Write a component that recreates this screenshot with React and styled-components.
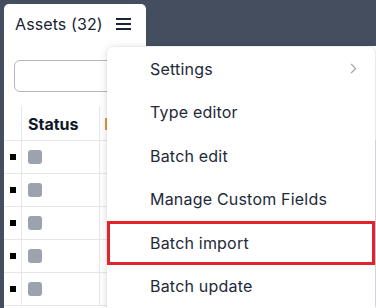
import { ChevronRight } from 'lucide-react'
import styled, { createGlobalStyle } from 'styled-components'

const GlobalStyle = createGlobalStyle`
    html, body {
        margin: 0;
        padding: 0;
        background: #444e5e;
        font-family: Inter, 'Noto Sans', sans-serif;
        overflow: hidden;
    }
`

const rows = [1, 2, 3, 4, 5]

const menuItems = [
    { label: 'Settings', sub: true },
    { label: 'Type editor' },
    { label: 'Batch edit' },
    { label: 'Manage Custom Fields' },
    { label: 'Batch import', marked: true },
    { label: 'Batch update' },
]

export default function App() {
    return (
        <Page>
            <GlobalStyle />
            <Panel>
                <Tab>
                    <TabTitle>Assets (32)</TabTitle>
                    <Burger>
                        <span />
                        <span />
                        <span />
                    </Burger>
                </Tab>
                <Body>
                    <Search />
                    <Table>
                        <HeadRow>
                            <Cell $w={18} />
                            <HeadCell>Status</HeadCell>
                            <HeadCell>
                                <SortMark />
                            </HeadCell>
                        </HeadRow>
                        {rows.map((r) => (
                            <Row key={r}>
                                <Cell $w={18}>
                                    <Dot />
                                </Cell>
                                <Cell $w={78}>
                                    <StatusBox />
                                </Cell>
                                <Cell />
                            </Row>
                        ))}
                    </Table>
                </Body>
            </Panel>

            <Menu>
                {menuItems.map((item) => (
                    <MenuItem key={item.label} $marked={item.marked}>
                        <span>{item.label}</span>
                        {item.sub && <ChevronRight size={17} strokeWidth={1.5} color="#9ca3af" />}
                    </MenuItem>
                ))}
            </Menu>
        </Page>
    )
}

const Page = styled.div`
    position: relative;
    width: 376px;
    height: 308px;
    padding: 4px 0 0 4px;
    box-sizing: border-box;
    overflow: hidden;
`

const Panel = styled.div`
    display: flex;
    flex-direction: column;
`

const Tab = styled.div`
    display: flex;
    align-items: center;
    width: 142px;
    height: 42px;
    padding: 0 0 3px 11px;
    box-sizing: border-box;
    background: #fff;
    border-radius: 5px 5px 0 0;
`

const TabTitle = styled.div`
    font-size: 16px;
    color: #1a2433;
    letter-spacing: 0.1px;
`

const Burger = styled.div`
    display: flex;
    flex-direction: column;
    gap: 3.5px;
    margin-left: 13px;
    padding-top: 1px;

    span {
        display: block;
        width: 15px;
        height: 1.7px;
        background: #1a2433;
    }
`

const Body = styled.div`
    display: flex;
    flex-direction: column;
    background: #fff;
    height: 270px;
    padding-top: 14px;
`

const Search = styled.div`
    margin-left: 10px;
    width: 300px;
    height: 32px;
    box-sizing: border-box;
    border: 1px solid #b5b8bd;
    border-radius: 6px;
`

const Table = styled.div`
    display: flex;
    flex-direction: column;
    margin-top: 15px;
`

const Row = styled.div`
    display: flex;
    height: 33px;
    border-bottom: 1px solid #e5e7eb;
    box-sizing: border-box;
`

const HeadRow = styled(Row)`
    height: 34px;
`

const Cell = styled.div`
    display: flex;
    align-items: center;
    flex: ${(p) => (p.$w ? `0 0 ${p.$w}px` : '1')};
    border-right: 1px solid #e5e7eb;
    box-sizing: border-box;
    padding-left: 6px;
`

const HeadCell = styled(Cell)`
    flex: 0 0 78px;
    font-size: 16px;
    font-weight: 700;
    color: #111827;
    padding-left: 6px;
    padding-top: 1px;

    &:last-child {
        flex: 1;
        border-right: none;
        padding-left: 5px;
    }
`

const SortMark = styled.div`
    width: 2px;
    height: 12px;
    background: #e8943a;
`

const Dot = styled.div`
    width: 6px;
    height: 6px;
    background: #000;
`

const StatusBox = styled.div`
    width: 14px;
    height: 14px;
    border-radius: 3px;
    background: #9ca3af;
`

const Menu = styled.div`
    position: absolute;
    left: 107px;
    top: 47px;
    width: 268px;
    height: 290px;
    background: #fff;
    border-radius: 6px;
    box-shadow: 0 1px 8px rgba(0, 0, 0, 0.14), 0 0 2px rgba(0, 0, 0, 0.08);
    display: flex;
    flex-direction: column;
`

const MenuItem = styled.div`
    display: flex;
    align-items: center;
    justify-content: space-between;
    height: 43.5px;
    flex: 0 0 43.5px;
    box-sizing: border-box;
    font-size: 16px;
    color: #1e2939;
    letter-spacing: 0.2px;
    border: 3px solid ${(p) => (p.$marked ? '#e3232a' : 'transparent')};
    padding-left: 40px;
    padding-right: 10px;
`
